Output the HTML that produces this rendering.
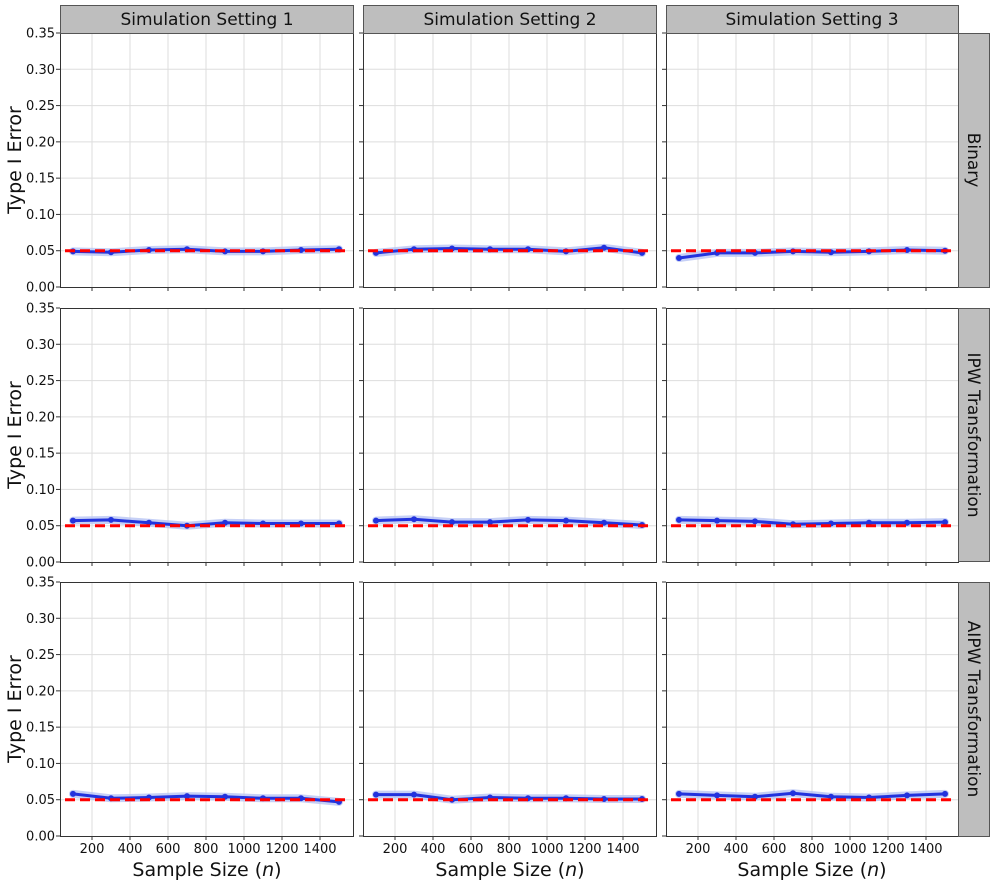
<!DOCTYPE html>
<html><head><meta charset="utf-8"><style>
html,body{margin:0;padding:0;background:#fff}
svg{display:block;font-family:"DejaVu Sans","Liberation Sans",sans-serif}
</style></head><body>
<svg id="s" width="996" height="882" viewBox="0 0 996 882">
<g id="shapes"></g>
<g font-size="17" text-anchor="middle" fill="#111">
<rect x="60.5" y="5.5" width="293" height="28" fill="#bebebe" stroke="#555"/>
<rect x="363.5" y="5.5" width="293" height="28" fill="#bebebe" stroke="#555"/>
<rect x="666.5" y="5.5" width="292" height="28" fill="#bebebe" stroke="#555"/>
<text x="207" y="25">Simulation Setting 1</text>
<text x="510" y="25">Simulation Setting 2</text>
<text x="812" y="25">Simulation Setting 3</text>
<rect x="958.5" y="33.5" width="31" height="254" fill="#bebebe" stroke="#555"/>
<rect x="958.5" y="308.5" width="31" height="253" fill="#bebebe" stroke="#555"/>
<rect x="958.5" y="582.5" width="31" height="254" fill="#bebebe" stroke="#555"/>
<text transform="translate(968,160) rotate(90)">Binary</text>
<text transform="translate(968,435) rotate(90)">IPW Transformation</text>
<text transform="translate(968,709) rotate(90)">AIPW Transformation</text>
</g>
<g font-size="19" text-anchor="middle" fill="#111">
<text transform="translate(21,160) rotate(-90)">Type I Error</text>
<text transform="translate(21,435) rotate(-90)">Type I Error</text>
<text transform="translate(21,709) rotate(-90)">Type I Error</text>
<text x="207" y="876">Sample Size (<tspan font-style="italic">n</tspan>)</text>
<text x="510" y="876">Sample Size (<tspan font-style="italic">n</tspan>)</text>
<text x="812" y="876">Sample Size (<tspan font-style="italic">n</tspan>)</text>
</g>
<g font-size="13" text-anchor="end" fill="#111">
<g transform="translate(0,0)"><text x="55" y="291.5">0.00</text><text x="55" y="255.2">0.05</text><text x="55" y="218.9">0.10</text><text x="55" y="182.6">0.15</text><text x="55" y="146.4">0.20</text><text x="55" y="110.1">0.25</text><text x="55" y="73.8">0.30</text><text x="55" y="37.5">0.35</text></g>
<g transform="translate(0,275)"><text x="55" y="291.5">0.00</text><text x="55" y="255.2">0.05</text><text x="55" y="218.9">0.10</text><text x="55" y="182.6">0.15</text><text x="55" y="146.4">0.20</text><text x="55" y="110.1">0.25</text><text x="55" y="73.8">0.30</text><text x="55" y="37.5">0.35</text></g>
<g transform="translate(0,549)"><text x="55" y="291.5">0.00</text><text x="55" y="255.2">0.05</text><text x="55" y="218.9">0.10</text><text x="55" y="182.6">0.15</text><text x="55" y="146.4">0.20</text><text x="55" y="110.1">0.25</text><text x="55" y="73.8">0.30</text><text x="55" y="37.5">0.35</text></g>
</g>
<g font-size="13" text-anchor="middle" fill="#111">
<g transform="translate(60,0)"><text x="32" y="853">200</text><text x="70" y="853">400</text><text x="108" y="853">600</text><text x="146" y="853">800</text><text x="184" y="853">1000</text><text x="222" y="853">1200</text><text x="260" y="853">1400</text></g>
<g transform="translate(363,0)"><text x="32" y="853">200</text><text x="70" y="853">400</text><text x="108" y="853">600</text><text x="146" y="853">800</text><text x="184" y="853">1000</text><text x="222" y="853">1200</text><text x="260" y="853">1400</text></g>
<g transform="translate(666,0)"><text x="32" y="853">200</text><text x="70" y="853">400</text><text x="108" y="853">600</text><text x="146" y="853">800</text><text x="184" y="853">1000</text><text x="222" y="853">1200</text><text x="260" y="853">1400</text></g>
</g>
</svg>
<script>
(function(){
var g=document.getElementById('shapes'),h='';
var L=[60,363,666],W=[293,293,292],T=[33,308,582],H=254;
var D=[
[[.049,.048,.051,.052,.049,.049,.051,.052],[.047,.052,.053,.052,.052,.049,.054,.047],[.040,.047,.047,.049,.048,.049,.051,.050]],
[[.057,.058,.054,.050,.054,.053,.053,.053],[.057,.059,.055,.055,.058,.057,.054,.051],[.058,.057,.056,.052,.053,.054,.054,.055]],
[[.058,.052,.053,.055,.054,.052,.052,.047],[.057,.057,.050,.053,.052,.052,.051,.051],[.058,.056,.054,.059,.054,.053,.056,.058]]];
for(var r=0;r<3;r++)for(var c=0;c<3;c++){
var l=L[c],t=T[r],w=W[c];
function X(n){return l+32+(n-200)*0.19}
function Y(v){return t+H-v/0.35*H}
h+='<rect x="'+(l+.5)+'" y="'+(t+.5)+'" width="'+w+'" height="'+H+'" fill="#fff"/>';
for(var n=200;n<=1400;n+=200){var x=X(n);h+='<line x1="'+x+'" x2="'+x+'" y1="'+t+'" y2="'+(t+H)+'" stroke="#ddd" stroke-width="1"/>';h+='<line x1="'+x+'" x2="'+x+'" y1="'+(t+H)+'" y2="'+(t+H+4)+'" stroke="#333"/>';}
for(var k=1;k<7;k++){var y=Y(k*.05);h+='<line x1="'+l+'" x2="'+(l+w)+'" y1="'+y+'" y2="'+y+'" stroke="#ddd"/>';}
for(var k=0;k<8;k++){var y=Y(k*.05);h+='<line x1="'+(l-4)+'" x2="'+l+'" y1="'+y+'" y2="'+y+'" stroke="#333"/>';}
var d=D[r][c],p=[];for(var i=0;i<8;i++)p.push(X(100+200*i).toFixed(1)+','+Y(d[i]).toFixed(1));
h+='<polyline points="'+p.join(' ')+'" fill="none" stroke="#b8c4f4" stroke-width="8" stroke-linejoin="round" stroke-linecap="round" opacity=".8"/>';
h+='<polyline points="'+p.join(' ')+'" fill="none" stroke="#2233dd" stroke-width="3"/>';
for(var i=0;i<8;i++){var q=p[i].split(',');h+='<circle cx="'+q[0]+'" cy="'+q[1]+'" r="3" fill="#2233dd"/>';}
var y5=Y(.05);h+='<line x1="'+(l+5)+'" x2="'+(l+w-5)+'" y1="'+y5+'" y2="'+y5+'" stroke="#ff0000" stroke-width="3" stroke-dasharray="10,5"/>';
h+='<rect x="'+(l+.5)+'" y="'+(t+.5)+'" width="'+w+'" height="'+H+'" fill="none" stroke="#333"/>';
}
g.innerHTML=h;
})();
</script>
</body></html>
